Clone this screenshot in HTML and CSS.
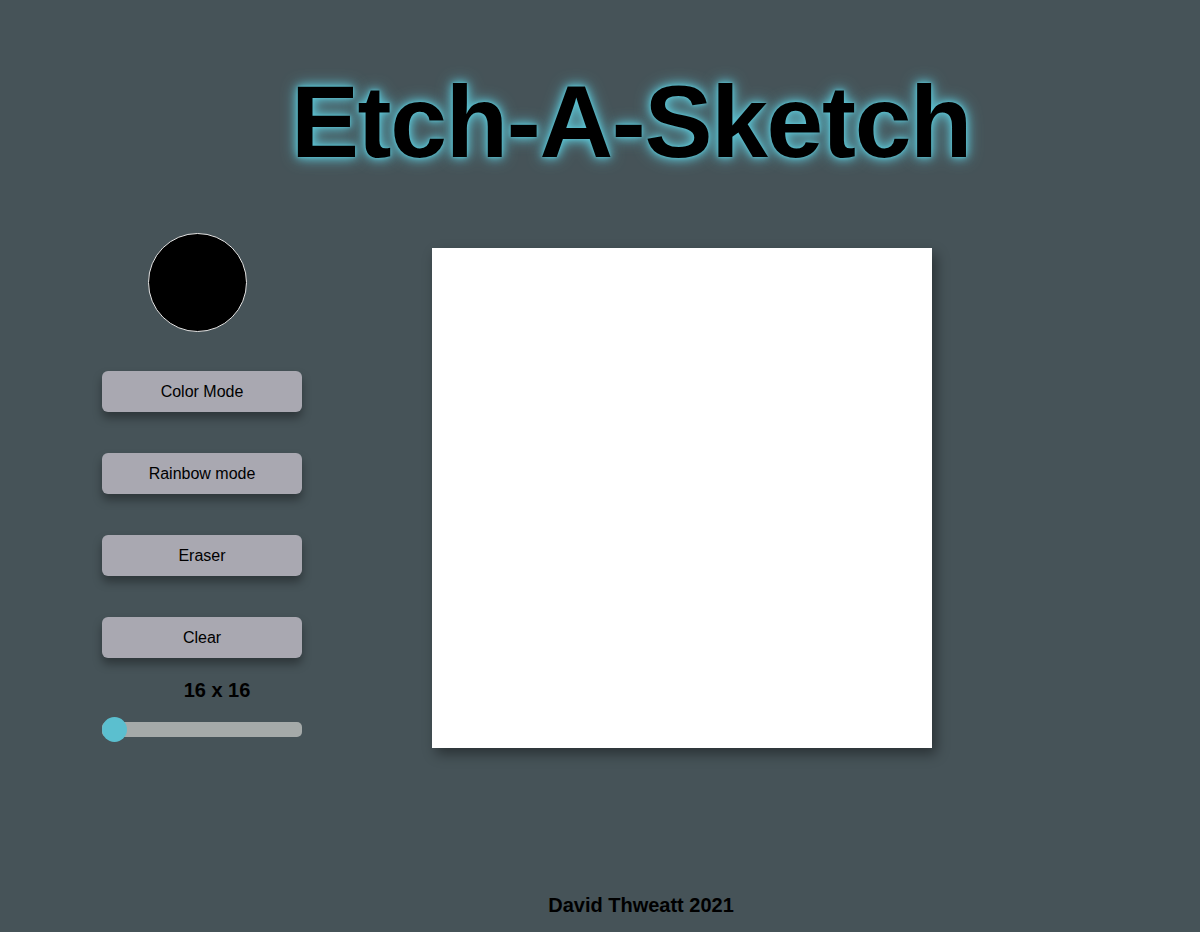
FILE: index.html
```html
<!DOCTYPE html>
<html>
<head>
<meta charset="utf-8">
<link rel="stylesheet" href="styles.css">
</head>
<body>
<header class="header">
  <h1 class="title">Etch-A-Sketch</h1>
</header>
<main class="main">
  <aside class="controls">
    <div class="swatch"></div>
    <button class="btn btn-first">Color Mode</button>
    <button class="btn">Rainbow mode</button>
    <button class="btn">Eraser</button>
    <button class="btn">Clear</button>
    <div class="size-label">16 x 16</div>
    <div class="slider">
      <div class="track"></div>
      <div class="thumb"></div>
    </div>
  </aside>
  <section class="board"></section>
</main>
<footer class="footer">David Thweatt 2021</footer>
</body>
</html>
```
FILE: styles.css
```css
html, body {
  margin: 0;
  padding: 0;
}
body {
  background: #465358;
  width: 1200px;
  height: 932px;
  font-family: "Liberation Sans", Arial, sans-serif;
  color: #000;
  display: flex;
  flex-direction: column;
  overflow: hidden;
}
.header {
  display: flex;
  justify-content: center;
  padding-left: 62px;
  padding-top: 64px;
}
.title {
  margin: 0;
  font-size: 102px;
  line-height: 116px;
  font-weight: 700;
  letter-spacing: -1.3px;
  text-shadow: 0 0 16px #5cc3d3, 0 0 8px #5cc3d3, 0 0 3px #5cc3d3;
}
.main {
  display: flex;
  align-items: flex-start;
  padding-left: 102px;
  margin-top: 53px;
  gap: 130px;
}
.controls {
  width: 200px;
  display: flex;
  flex-direction: column;
  align-items: center;
}
.swatch {
  width: 97px;
  height: 97px;
  border-radius: 50%;
  background: #000;
  border: 1px solid #e6e6e6;
  margin-right: 10px;
}
.btn {
  width: 200px;
  height: 41px;
  margin-top: 41px;
  border: none;
  border-radius: 6px;
  background: #a9a8b1;
  font-family: "Liberation Sans", Arial, sans-serif;
  font-size: 16px;
  color: #000;
  box-shadow: 0 6px 10px rgba(0, 0, 0, 0.35);
  padding: 0;
}
.btn-first {
  margin-top: 39px;
}
.size-label {
  margin-top: 21px;
  margin-left: 30px;
  font-size: 20px;
  font-weight: 700;
  line-height: 22px;
}
.slider {
  position: relative;
  width: 200px;
  height: 26px;
  margin-top: 16px;
}
.track {
  position: absolute;
  left: 0;
  right: 0;
  top: 5px;
  height: 15px;
  border-radius: 5px;
  background: #a5aaa9;
}
.thumb {
  position: absolute;
  left: 0;
  top: 0;
  width: 25px;
  height: 25px;
  border-radius: 50%;
  background: #5bbfcf;
}
.board {
  width: 500px;
  height: 500px;
  margin-top: 15px;
  background: #fff;
  box-shadow: 4px 6px 12px rgba(0, 0, 0, 0.4);
}
.footer {
  margin-top: auto;
  padding-left: 82px;
  text-align: center;
  font-size: 20px;
  font-weight: 700;
  line-height: 22px;
  padding-bottom: 16px;
}
```
